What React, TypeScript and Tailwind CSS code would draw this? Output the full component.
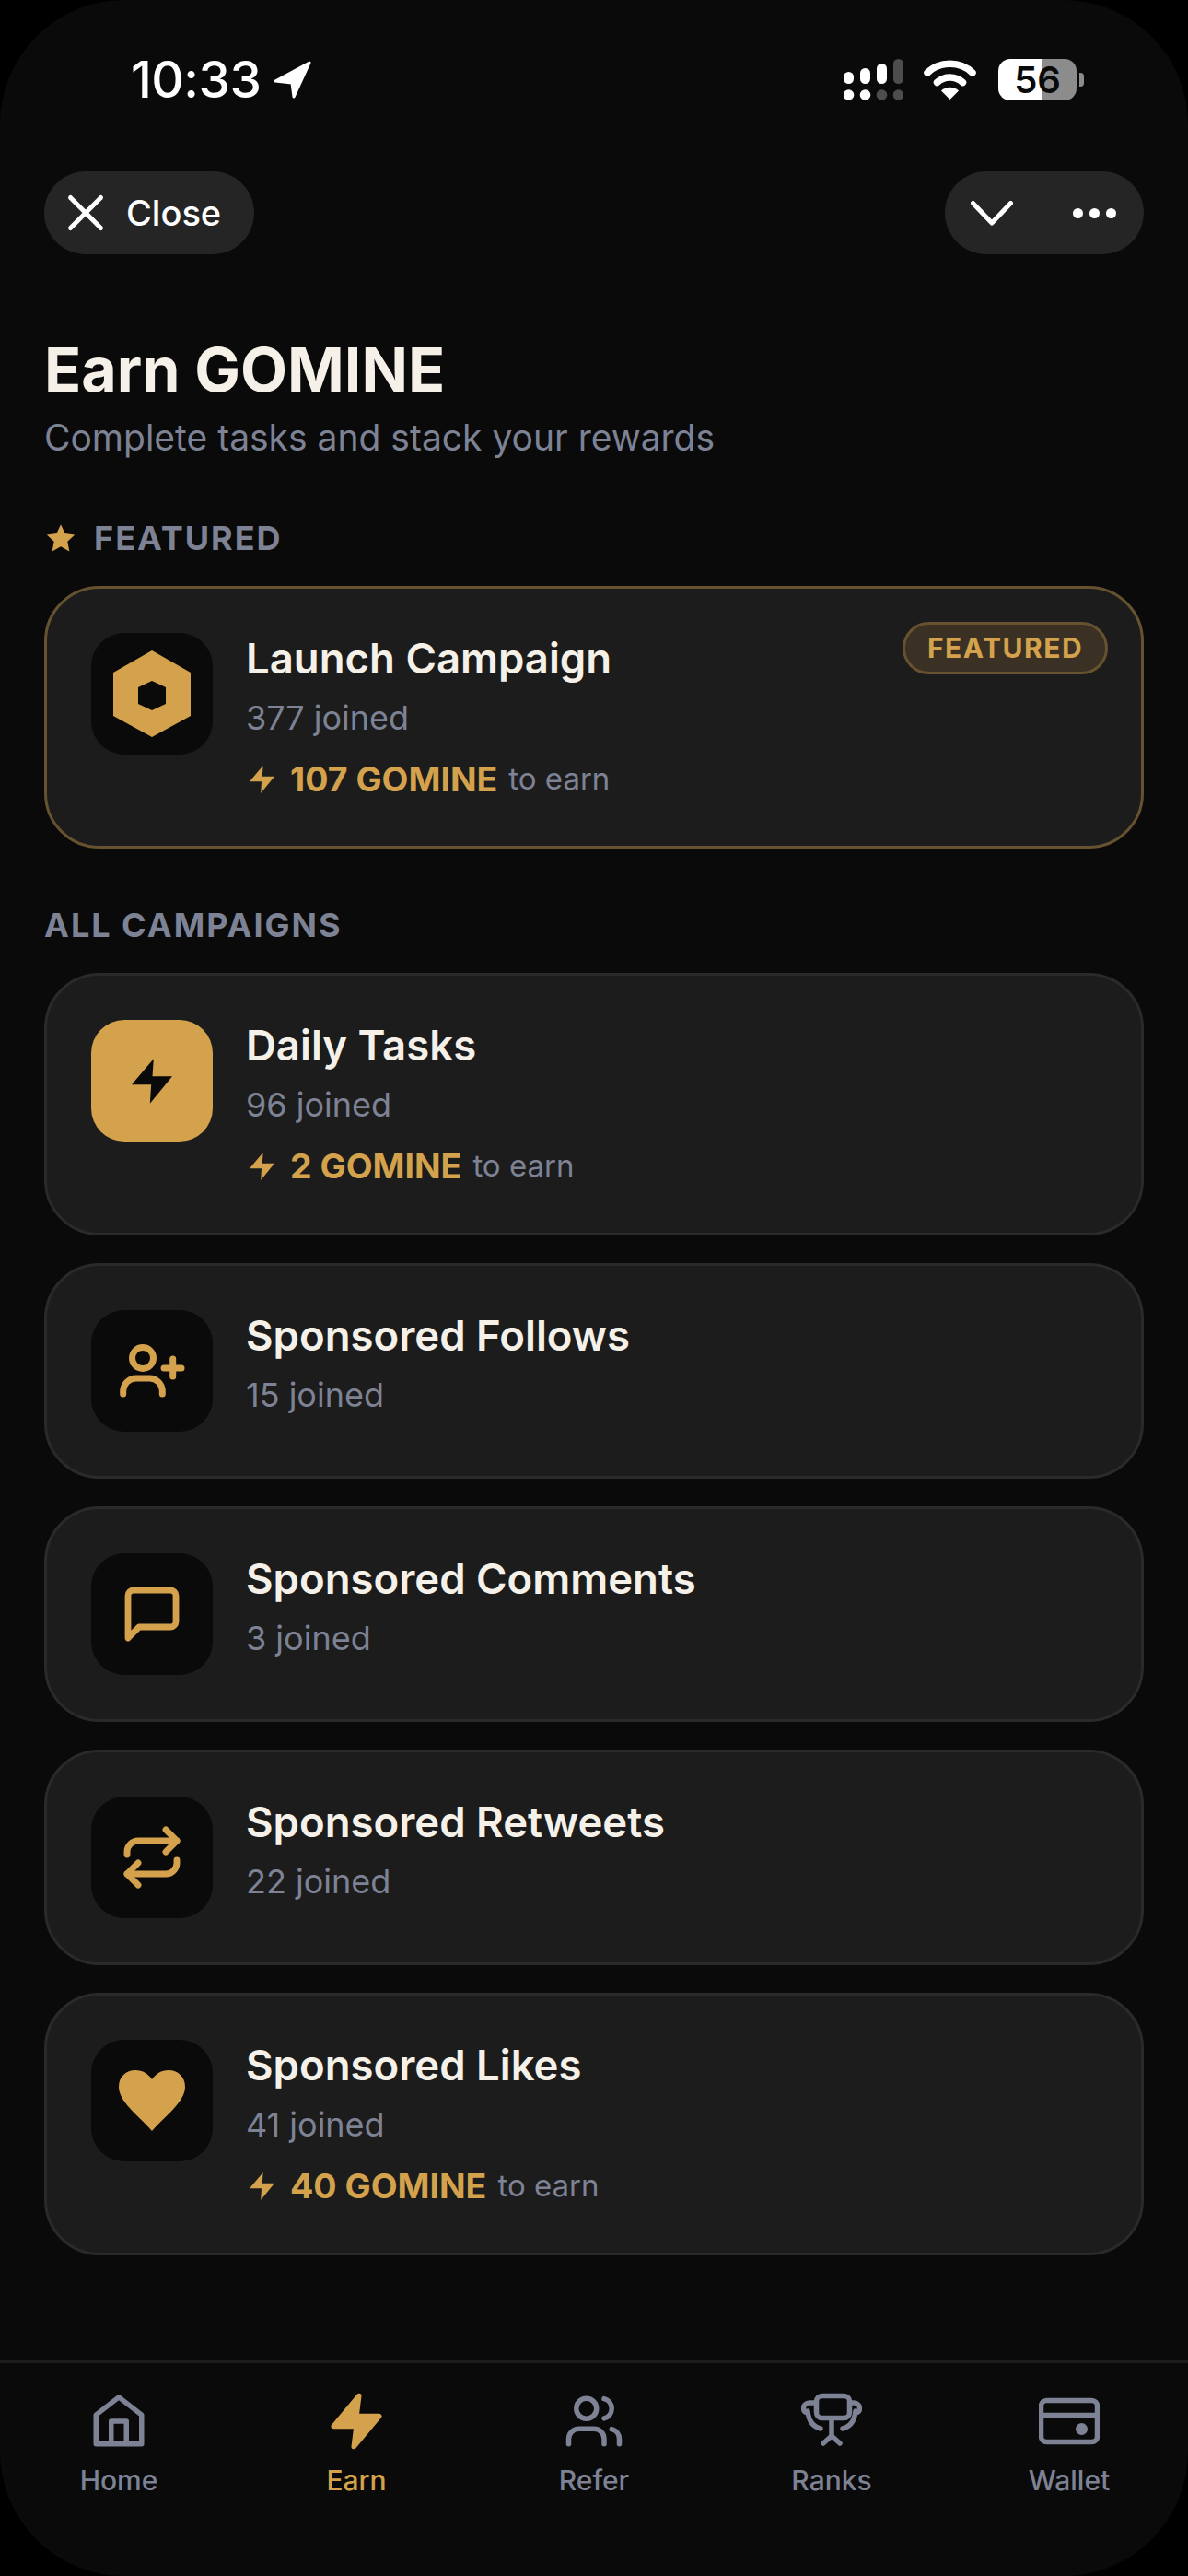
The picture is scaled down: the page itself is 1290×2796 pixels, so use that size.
import type { ReactNode } from "react";
import { Repeat, Users, X } from "lucide-react";

const GOLD = "#d4a24c";

function Bolt({ className, fill = GOLD }: { className: string; fill?: string }) {
  return (
    <svg viewBox="369 296 133 147" className={className}>
      <polygon points="441,296 369,381 433,381 429,443 502,354 437,354" fill={fill} />
    </svg>
  );
}

function Hexagon() {
  return (
    <svg viewBox="0 0 84 94" className="h-[94px] w-[84px]">
      <path
        fillRule="evenodd"
        fill={GOLD}
        d="M42 0 84 24V71L42 94 0 71V24ZM42 33 27 40V58L42 65 57 58V40Z"
      />
    </svg>
  );
}

function FollowIcon() {
  return (
    <svg viewBox="0 0 132 132" fill="none" stroke={GOLD} strokeWidth="7" strokeLinecap="round" className="h-[132px] w-[132px]">
      <circle cx="56" cy="52" r="11.500" />
      <path d="M34.7 91v-3a14 14 0 0 1 14-14h14.6a14 14 0 0 1 14 14v3" />
      <path d="M79 63h19M88.700 53v19" />
    </svg>
  );
}

function CommentIcon() {
  return (
    <svg viewBox="0 0 132 132" fill="none" stroke={GOLD} strokeWidth="6.800" strokeLinejoin="round" className="h-[132px] w-[132px]">
      <path d="M40 92V46a6 6 0 0 1 6-6h40a6 6 0 0 1 6 6v28a6 6 0 0 1-6 6H52Z" />
    </svg>
  );
}

function Heart() {
  return (
    <svg viewBox="0 0 72 66" className="h-[66px] w-[72px]">
      <path
        fill={GOLD}
        d="M36 66C20 48 0 34 0 18 0 7 8 0 18 0c8 0 14 4 18 10C40 4 46 0 54 0c10 0 18 7 18 18 0 16-20 30-36 48Z"
      />
    </svg>
  );
}

function HomeIcon() {
  return (
    <svg viewBox="0 0 24 24" fill="none" stroke="currentColor" strokeWidth="2" strokeLinejoin="round" className="h-[66px] w-[66px]">
      <path d="M3 9.500 12 2.500l9 7V21H3Z" />
      <path d="M9 21v-9h6v9" />
    </svg>
  );
}

function EarnIcon() {
  return (
    <svg viewBox="0 0 24 24" fill={GOLD} stroke={GOLD} strokeWidth="2" strokeLinejoin="round" className="h-[66px] w-[66px]">
      <polygon points="13 2 3 14 12 14 11 22 21 10 12 10 13 2" />
    </svg>
  );
}

function RanksIcon() {
  return (
    <svg viewBox="0 0 66 66" fill="none" stroke="currentColor" strokeWidth="5.500" strokeLinecap="round" className="h-[66px] w-[66px]">
      <rect x="16.500" y="5.500" width="36" height="24" rx="6" />
      <path d="M33 30v19M33 49l-9 8M33 49l9 8" />
      <path d="M15 13H9c-4 0-6.500 3-6.500 6 0 3 2 4.500 4.500 5M7 22c1 10 6 17 14 19" />
      <path d="M53 13h4c4 0 6.500 3 6.500 6 0 3-2 4.500-4.500 5M59 22c-1 10-6 17-14 19" />
    </svg>
  );
}

function WalletIcon() {
  return (
    <svg viewBox="0 0 66 66" fill="none" stroke="currentColor" strokeWidth="5.500" className="h-[66px] w-[66px]">
      <rect x="2.500" y="10.500" width="61" height="45" rx="6" />
      <path d="M3 26.500h60" />
      <ellipse cx="46.500" cy="41.500" rx="6.500" ry="6.500" fill="currentColor" stroke="none" />
    </svg>
  );
}

function SignalIcon() {
  const dim = "#4d4d4d";
  return (
    <svg viewBox="0 0 65 45" className="h-[45px] w-[65px]">
      <rect x="0" y="14" width="11" height="13" rx="5.500" fill="white" />
      <rect x="18" y="10" width="11" height="17" rx="5.500" fill="white" />
      <rect x="36" y="5" width="11" height="22" rx="5.500" fill="white" />
      <rect x="54" y="0" width="11" height="27" rx="5.500" fill={dim} />
      <circle cx="5.500" cy="39" r="5.800" fill="white" />
      <circle cx="23.500" cy="39" r="5.800" fill="white" />
      <circle cx="41.500" cy="39" r="5.800" fill={dim} />
      <circle cx="59.500" cy="39" r="5.800" fill={dim} />
    </svg>
  );
}

function WifiIcon() {
  return (
    <svg viewBox="0 0 57 43" fill="none" stroke="white" strokeWidth="7.500" strokeLinecap="round" className="h-[43px] w-[57px]">
      <path d="M4 14C17 1 40 1 53 14" />
      <path d="M14.500 24.500C22 17 35 17 42.500 24.500" />
      <path d="M28.500 43 19 33.500C24 28.500 33 28.500 38 33.500Z" fill="white" stroke="none" />
    </svg>
  );
}

function StatusBar() {
  return (
    <div className="flex h-[186px] items-start justify-between pt-[64px] pr-[113px] pl-[142px]">
      <div className="flex h-[45px] items-center gap-[14px]">
        <span className="text-[55px] leading-none font-medium tracking-[-0.5px] text-white">10:33</span>
        <svg viewBox="0 0 41 41" className="h-[41px] w-[41px]">
          <path
            fill="white"
            stroke="white"
            strokeWidth="3"
            strokeLinejoin="round"
            d="M39 2 2 22l18 2L22 39Z"
          />
        </svg>
      </div>
      <div className="flex items-center">
        <SignalIcon />
        <div className="ml-[22px]">
          <WifiIcon />
        </div>
        <div className="ml-[24px] flex h-[45px] w-[85px] items-center justify-center rounded-[13px] bg-[linear-gradient(90deg,#ffffff_0,#ffffff_48px,#8c8c8c_48px)] text-[40px] font-semibold text-[#0a0a0a]">
          56
        </div>
        <div className="ml-[3px] h-[15px] w-[5px] rounded-r-[4px] bg-[#8c8c8c]" />
      </div>
    </div>
  );
}

function HeaderPills() {
  return (
    <div className="flex items-center justify-between px-[48px]">
      <div className="flex h-[90px] w-[228px] items-center rounded-full bg-[#252525] pl-[27px] text-white">
        <X size={66} strokeWidth={1.800} className="-mx-[15px] shrink-0" />
        <span className="ml-[26px] text-[38px] leading-none font-medium">Close</span>
      </div>
      <div className="flex h-[90px] w-[216px] items-center rounded-full bg-[#252525] pr-[30px] pl-[28px]">
        <svg viewBox="0 0 46 27" fill="none" stroke="white" strokeWidth="5" strokeLinecap="round" strokeLinejoin="round" className="h-[27px] w-[46px]">
          <path d="M2.500 2.500 23 24 43.500 2.500" />
        </svg>
        <svg viewBox="0 0 47 11" fill="white" className="ml-auto h-[11px] w-[47px]">
          <circle cx="5.500" cy="5.500" r="5.500" />
          <circle cx="23.500" cy="5.500" r="5.500" />
          <circle cx="41.500" cy="5.500" r="5.500" />
        </svg>
      </div>
    </div>
  );
}

type Campaign = {
  title: string;
  joined: string;
  reward?: string;
  icon: ReactNode;
  solid?: boolean;
  featured?: boolean;
};

const campaigns: Campaign[] = [
  { title: "Daily Tasks", joined: "96 joined", reward: "2 GOMINE", icon: <Bolt className="h-[49px] w-[44px]" fill="#0a0a0a" />, solid: true },
  { title: "Sponsored Follows", joined: "15 joined", icon: <FollowIcon /> },
  { title: "Sponsored Comments", joined: "3 joined", icon: <CommentIcon /> },
  { title: "Sponsored Retweets", joined: "22 joined", icon: <Repeat size={72} color={GOLD} strokeWidth={2.300} /> },
  { title: "Sponsored Likes", joined: "41 joined", reward: "40 GOMINE", icon: <Heart /> },
];

function CampaignCard({ title, joined, reward, icon, solid, featured }: Campaign) {
  return (
    <div
      className={`relative flex gap-[36px] rounded-[60px] border-[3px] bg-[#1c1c1c] p-[48px] ${
        featured ? "border-[#66522f]" : "border-[#2a2a2a]"
      }`}
    >
      <div
        className={`flex h-[132px] w-[132px] shrink-0 items-center justify-center rounded-[36px] ${
          solid ? "bg-[#d4a24c]" : "bg-[#0a0a0a]"
        }`}
      >
        {icon}
      </div>
      <div className="flex flex-col">
        <div className="text-[45.500px] leading-[56px] font-semibold text-[#f5f1e8]">{title}</div>
        <div className="mt-[9px] text-[36px] leading-[54px] text-[#7d8294]">{joined}</div>
        {reward && (
          <div className="mt-[16px] flex h-[48px] items-center">
            <Bolt className="ml-[4px] h-[30px] w-[27px]" />
            <span className="ml-[17px] text-[37.500px] font-bold text-[#d4a24c]">{reward}</span>
            <span className="ml-[12px] text-[33px] text-[#7d8294]">to earn</span>
          </div>
        )}
      </div>
      {featured && (
        <div className="absolute top-[36px] right-[36px] flex h-[57px] w-[223px] items-center justify-center rounded-full border-[3px] border-[#66522f] bg-[#3a3124] text-[30px] font-bold tracking-[1.500px] text-[#d4a24c]">
          FEATURED
        </div>
      )}
    </div>
  );
}

const navItems = [
  { label: "Home", icon: <HomeIcon /> },
  { label: "Earn", icon: <EarnIcon />, active: true },
  { label: "Refer", icon: <Users size={66} strokeWidth={2} /> },
  { label: "Ranks", icon: <RanksIcon /> },
  { label: "Wallet", icon: <WalletIcon /> },
];

function BottomNav() {
  return (
    <div className="grid h-[234px] grid-cols-5 border-t-[3px] border-[#1c1c1c] pt-[30px]">
      {navItems.map((item) => (
        <div
          key={item.label}
          className={`flex flex-col items-center ${item.active ? "text-[#d4a24c]" : "text-[#7d8294]"}`}
        >
          {item.icon}
          <span className="mt-[13px] text-[30px] leading-[36px] font-medium">{item.label}</span>
        </div>
      ))}
    </div>
  );
}

export default function App() {
  return (
    <div className="h-[2796px] w-[1290px] bg-black font-['Inter',sans-serif]">
      <div className="flex h-full flex-col overflow-hidden rounded-[135px] bg-[#0a0a0a]">
        <StatusBar />
        <HeaderPills />
        <div className="flex-1 px-[48px]">
          <h1 className="mt-[85px] text-[66.300px] leading-[80px] font-bold text-[#f5f1e8]">Earn GOMINE</h1>
          <p className="mt-[9px] text-[39px] leading-[50px] text-[#7d8294]">Complete tasks and stack your rewards</p>

          <div className="mt-[62px] flex h-[44px] items-center">
            <svg viewBox="0 0 24 24" className="ml-[2px] h-[32px] w-[32px]" fill={GOLD}>
              <polygon points="12,1 15.400,8.300 23.400,9.300 17.500,14.800 19,22.800 12,18.900 5,22.800 6.500,14.800 .6,9.300 8.600,8.300" />
            </svg>
            <span className="ml-[20px] text-[36px] font-bold tracking-[2px] text-[#7d8294]">FEATURED</span>
          </div>

          <div className="mt-[30px]">
            <CampaignCard
              title="Launch Campaign"
              joined="377 joined"
              reward="107 GOMINE"
              icon={<Hexagon />}
              featured
            />
          </div>

          <div className="mt-[61px] h-[44px] text-[36px] leading-[44px] font-bold tracking-[2px] text-[#7d8294]">
            ALL CAMPAIGNS
          </div>

          <div className="mt-[30px] flex flex-col gap-[30px]">
            {campaigns.map((c) => (
              <CampaignCard key={c.title} {...c} />
            ))}
          </div>
        </div>
        <BottomNav />
      </div>
    </div>
  );
}
